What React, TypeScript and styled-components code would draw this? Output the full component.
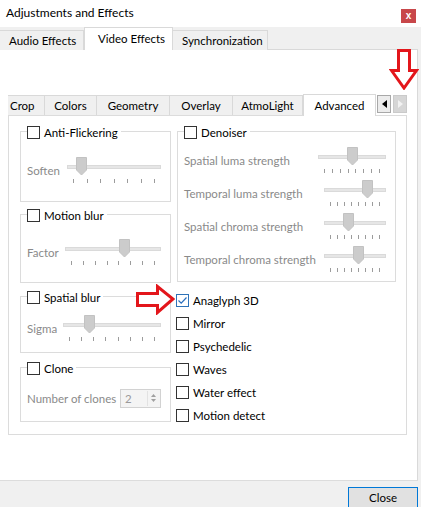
import React from "react";
import styled, { createGlobalStyle, css } from "styled-components";

const font = `"Lato", "Liberation Sans", Arial, sans-serif`;

const GlobalStyle = createGlobalStyle`
  html, body {
    margin: 0;
    padding: 0;
    background: #f0f0f0;
  }
  body {
    font-family: ${font};
    font-size: 11.5px;
    color: #000;
  }
`;

const Window = styled.div`
  position: relative;
  width: 421px;
  height: 507px;
  overflow: hidden;
  background: #f0f0f0;
  display: flex;
  flex-direction: column;
`;

const TitleBar = styled.div`
  height: 27px;
  flex: none;
  background: #fff;
  display: flex;
  align-items: flex-start;
  justify-content: space-between;
  padding: 0 5px 0 6px;
  box-sizing: border-box;
`;

const Title = styled.div`
  margin-top: 5px;
  font-size: 12px;
  line-height: 15px;
`;

const TitleClose = styled.div`
  margin-top: 9px;
  width: 15px;
  height: 14px;
  background: #c8474a;
  color: #fff;
  font-family: "Liberation Sans", Arial, sans-serif;
  font-weight: bold;
  font-size: 10px;
  line-height: 13px;
  text-align: center;
`;

const TabBar = styled.div`
  height: 23px;
  flex: none;
  display: flex;
  align-items: flex-end;
  width: 418px;
  box-sizing: border-box;
  border-bottom: 1px solid #d9d9d9;
`;

const OuterTab = styled.div<{ $active?: boolean; $w: number }>`
  width: ${(p) => p.$w}px;
  box-sizing: border-box;
  height: 20px;
  margin-bottom: -1px;
  padding-left: 9px;
  line-height: 19px;
  background: #f0f0f0;
  border: 1px solid #d9d9d9;
  border-bottom: none;
  border-left: none;
  ${(p) =>
    p.$active &&
    css`
      height: 23px;
      background: #fff;
      padding-left: 13px;
      line-height: 21px;
      border-left: 1px solid #d9d9d9;
    `}
`;

const Panel = styled.div`
  position: relative;
  width: 418px;
  height: 431px;
  flex: none;
  box-sizing: border-box;
  background: #fff;
  border-right: 1px solid #d9d9d9;
  border-bottom: 1px solid #dcdcdc;
  padding: 44px 0 0 8px;
`;

const InnerTabBar = styled.div`
  height: 21px;
  display: flex;
  align-items: flex-end;
  width: 399px;
  position: relative;
`;

const InnerTab = styled.div<{ $active?: boolean; $w: number }>`
  width: ${(p) => p.$w}px;
  box-sizing: border-box;
  height: 20px;
  line-height: 19px;
  text-align: center;
  background: #f0f0f0;
  border: 1px solid #d9d9d9;
  border-bottom: none;
  border-left: none;
  &:first-child {
    text-align: left;
    padding-left: 2px;
  }
  ${(p) =>
    p.$active &&
    css`
      height: 22px;
      line-height: 21px;
      background: #fff;
      margin-bottom: -1px;
      border-left: 1px solid #d9d9d9;
    `}
`;

const ScrollButtons = styled.div`
  align-self: flex-start;
  margin-top: 1px;
  margin-left: 1px;
  display: flex;
  gap: 2px;
`;

const ScrollButton = styled.div<{ $disabled?: boolean }>`
  width: 14px;
  height: 18px;
  box-sizing: border-box;
  display: flex;
  align-items: center;
  justify-content: center;
  border: 1px solid ${(p) => (p.$disabled ? "#cacaca" : "#a8a8a8")};
  background: ${(p) => (p.$disabled ? "#d6d6d6" : "#ececec")};
`;

const InnerPage = styled.div`
  width: 399px;
  height: 320px;
  box-sizing: border-box;
  border: 1px solid #dcdcdc;
  display: flex;
  gap: 6px;
  padding: 15px 10px 0 11px;
`;

const Column = styled.div<{ $w: number }>`
  width: ${(p) => p.$w}px;
  display: flex;
  flex-direction: column;
`;

const GroupBox = styled.div<{ $h: number; $mt?: number }>`
  height: ${(p) => p.$h}px;
  margin-top: ${(p) => p.$mt ?? 0}px;
  box-sizing: border-box;
  border: 1px solid #dcdcdc;
  display: flex;
  flex-direction: column;
  flex: none;
`;

const Legend = styled.div`
  align-self: flex-start;
  margin: -6px 0 0 6px;
  padding-right: 3px;
  background: #fff;
  display: flex;
  align-items: center;
  gap: 4px;
  height: 13px;
  line-height: 13px;
`;

const GroupBody = styled.div<{ $gap?: number }>`
  flex: 1;
  display: flex;
  flex-direction: column;
  justify-content: center;
  gap: ${(p) => p.$gap ?? 0}px;
  padding: 0 9px 0 6px;
`;

const Row = styled.div`
  display: flex;
  align-items: center;
  justify-content: space-between;
`;

const DimLabel = styled.span`
  color: #8a8a8a;
  white-space: nowrap;
`;

const Box = styled.span<{ $checked?: boolean }>`
  width: 13px;
  height: 13px;
  flex: none;
  box-sizing: border-box;
  border: 1px solid ${(p) => (p.$checked ? "#2f73b8" : "#333")};
  background: #fff;
  display: flex;
  align-items: center;
  justify-content: center;
`;

const CheckRow = styled.div`
  display: flex;
  align-items: center;
  gap: 4px;
  height: 15px;
  line-height: 15px;
`;

const CheckList = styled.div`
  margin-top: 11px;
  margin-left: -1px;
  display: flex;
  flex-direction: column;
  gap: 8px;
`;

const SliderWrap = styled.div<{ $w: number }>`
  position: relative;
  width: ${(p) => p.$w}px;
  height: 27px;
  flex: none;
`;

const Track = styled.div`
  margin-top: 8px;
  height: 4px;
  box-sizing: border-box;
  background: #e6e6e6;
  border: 1px solid #dadada;
`;

const Thumb = styled.svg`
  position: absolute;
  top: 0;
`;

const Ticks = styled.div`
  margin-top: 10px;
  display: flex;
  justify-content: space-between;
  padding: 0 6px;
`;

const Tick = styled.span`
  width: 1px;
  height: 4px;
  background: #9c9c9c;
`;

const SpinBox = styled.div`
  width: 41px;
  height: 19px;
  box-sizing: border-box;
  border: 1px solid #d2d2d2;
  background: #f4f4f4;
  display: flex;
  align-items: center;
  justify-content: space-between;
  padding: 0 1px 0 4px;
  color: #9a9a9a;
`;

const SpinArrows = styled.div`
  width: 11px;
  height: 15px;
  display: flex;
  flex-direction: column;
  align-items: center;
  justify-content: center;
  gap: 2px;
  border-left: 1px solid #e2e2e2;
`;

const Footer = styled.div`
  flex: 1;
  display: flex;
  justify-content: flex-end;
  align-items: flex-start;
  padding: 6px 3px 0 0;
`;

const CloseButton = styled.div`
  width: 70px;
  height: 23px;
  box-sizing: border-box;
  border: 1px solid #0078d7;
  background: #e1e1e1;
  text-align: center;
  line-height: 20px;
  flex: none;
`;

const Annotation = styled.svg<{ $x: number; $y: number }>`
  position: absolute;
  left: ${(p) => p.$x}px;
  top: ${(p) => p.$y}px;
`;

const Checkbox = ({ checked }: { checked?: boolean }) => (
  <Box $checked={checked}>
    {checked && (
      <svg width="11" height="11" viewBox="0 0 11 11">
        <path d="M1.5 5.5 L4.2 8.2 L9.5 2.5" fill="none" stroke="#2a6fbe" strokeWidth="1.2" />
      </svg>
    )}
  </Box>
);

const Slider = ({ w, value, ticks }: { w: number; value: number; ticks: number }) => {
  const center = 6 + value * (w - 12);
  return (
    <SliderWrap $w={w}>
      <Track />
      <Thumb width="11" height="19" viewBox="0 0 11 19" style={{ left: center - 5.5 }}>
        <path d="M0.5 0.5 H10.5 V13 L5.5 18 L0.5 13 Z" fill="#cccccc" stroke="#c2c2c2" />
      </Thumb>
      <Ticks>
        {Array.from({ length: ticks }).map((_, i) => (
          <Tick key={i} />
        ))}
      </Ticks>
    </SliderWrap>
  );
};

const Group = ({
  title,
  h,
  mt,
  gap,
  children,
}: {
  title: string;
  h: number;
  mt?: number;
  gap?: number;
  children: React.ReactNode;
}) => (
  <GroupBox $h={h} $mt={mt}>
    <Legend>
      <Checkbox />
      <span>{title}</span>
    </Legend>
    <GroupBody $gap={gap}>{children}</GroupBody>
  </GroupBox>
);

const innerTabs = [
  { label: "Crop", w: 37 },
  { label: "Colors", w: 52 },
  { label: "Geometry", w: 73 },
  { label: "Overlay", w: 63 },
  { label: "AtmoLight", w: 70 },
  { label: "Advanced", w: 73, active: true },
];

const denoise = [
  { label: "Spatial luma strength", w: 68, value: 0.51 },
  { label: "Temporal luma strength", w: 62, value: 0.75 },
  { label: "Spatial chroma strength", w: 62, value: 0.37 },
  { label: "Temporal chroma strength", w: 62, value: 0.56 },
];

const effects = ["Anaglyph 3D", "Mirror", "Psychedelic", "Waves", "Water effect", "Motion detect"];

export default function App() {
  return (
    <>
      <GlobalStyle />
      <Window>
        <TitleBar>
          <Title>Adjustments and Effects</Title>
          <TitleClose>x</TitleClose>
        </TitleBar>

        <TabBar>
          <OuterTab $w={84}>Audio Effects</OuterTab>
          <OuterTab $w={89} $active>
            Video Effects
          </OuterTab>
          <OuterTab $w={95}>Synchronization</OuterTab>
        </TabBar>

        <Panel>
          <InnerTabBar>
            {innerTabs.map((t) => (
              <InnerTab key={t.label} $w={t.w} $active={t.active}>
                {t.label}
              </InnerTab>
            ))}
            <ScrollButtons>
              <ScrollButton>
                <svg width="5" height="8" viewBox="0 0 5 8">
                  <path d="M5 0 V8 L0 4 Z" fill="#000" />
                </svg>
              </ScrollButton>
              <ScrollButton $disabled>
                <svg width="5" height="8" viewBox="0 0 5 8">
                  <path d="M0 0 V8 L5 4 Z" fill="#f2f2f2" />
                </svg>
              </ScrollButton>
            </ScrollButtons>
          </InnerTabBar>

          <InnerPage>
            <Column $w={151}>
              <Group title="Anti-Flickering" h={71}>
                <Row>
                  <DimLabel>Soften</DimLabel>
                  <Slider w={94} value={0.1} ticks={7} />
                </Row>
              </Group>
              <Group title="Motion blur" h={69} mt={12}>
                <Row>
                  <DimLabel>Factor</DimLabel>
                  <Slider w={96} value={0.64} ticks={8} />
                </Row>
              </Group>
              <Group title="Spatial blur" h={57} mt={13}>
                <Row>
                  <DimLabel>Sigma</DimLabel>
                  <Slider w={98} value={0.24} ticks={8} />
                </Row>
              </Group>
              <Group title="Clone" h={55} mt={14}>
                <Row>
                  <DimLabel>Number of clones</DimLabel>
                  <SpinBox>
                    <span>2</span>
                    <SpinArrows>
                      <svg width="5" height="3" viewBox="0 0 5 3">
                        <path d="M0 3 H5 L2.5 0 Z" fill="#a0a0a0" />
                      </svg>
                      <svg width="5" height="3" viewBox="0 0 5 3">
                        <path d="M0 0 H5 L2.5 3 Z" fill="#a0a0a0" />
                      </svg>
                    </SpinArrows>
                  </SpinBox>
                </Row>
              </Group>
            </Column>

            <Column $w={219}>
              <Group title="Denoiser" h={151} gap={6}>
                {denoise.map((d) => (
                  <Row key={d.label}>
                    <DimLabel>{d.label}</DimLabel>
                    <Slider w={d.w} value={d.value} ticks={8} />
                  </Row>
                ))}
              </Group>
              <CheckList>
                {effects.map((e, i) => (
                  <CheckRow key={e}>
                    <Checkbox checked={i === 0} />
                    <span>{e}</span>
                  </CheckRow>
                ))}
              </CheckList>
            </Column>
          </InnerPage>
        </Panel>

        <Footer>
          <CloseButton>Close</CloseButton>
        </Footer>

        <Annotation $x={389} $y={49} width="30" height="41" viewBox="0 0 30 41">
          <path
            d="M9.5 1.5 H20.5 V21.5 H27.5 L15 39 L2.5 21.5 H9.5 Z"
            fill="#fff"
            stroke="#e3161b"
            strokeWidth="3"
            strokeLinejoin="miter"
          />
        </Annotation>
        <Annotation $x={136} $y={284} width="39" height="31" viewBox="0 0 39 31">
          <path
            d="M1.5 9.5 H21.5 V2.5 L37 15 L21.5 28.5 V21.5 H1.5 Z"
            fill="#fff"
            stroke="#e3161b"
            strokeWidth="3"
            strokeLinejoin="miter"
          />
        </Annotation>
      </Window>
    </>
  );
}
